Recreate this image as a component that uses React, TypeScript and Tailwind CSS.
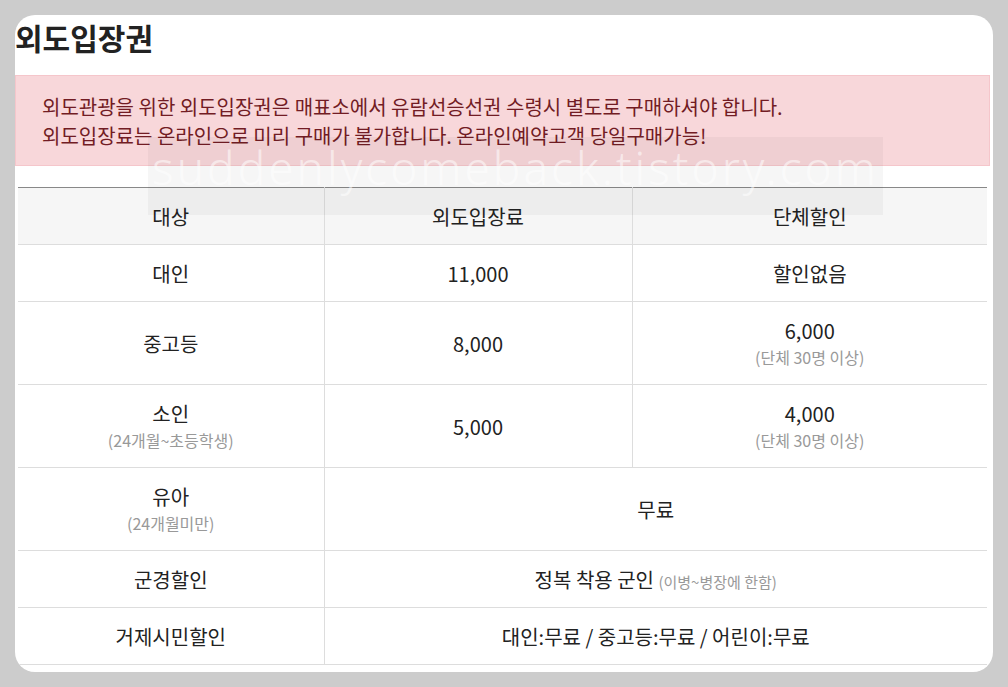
import React from "react";

const font = { fontFamily: '"Noto Sans CJK KR", "Noto Sans", sans-serif' };

function Cell({
  children,
  sub,
  colSpan,
  last,
  header,
}: {
  children: React.ReactNode;
  sub?: React.ReactNode;
  colSpan?: number;
  last?: boolean;
  header?: boolean;
}) {
  return (
    <td
      colSpan={colSpan}
      className={
        "text-center align-middle pt-[15px] pb-[14px] border-b border-[#dddddd] text-[20px] leading-[27px] text-[#222222] " +
        (last ? "" : "border-r ") +
        (header ? "bg-[#f6f6f6]" : "")
      }
    >
      <div className="h-[27px]">{children}</div>
      {sub && <div className="text-[16px] leading-[26px] text-[#999999]">{sub}</div>}
    </td>
  );
}

export default function App() {
  return (
    <div className="w-[1008px] h-[687px] bg-[#cccccc] p-[15px]" style={font}>
      <div className="relative w-[978px] h-[657px] bg-white rounded-[20px] overflow-hidden">
        <h2 className="mt-px text-[30px] leading-[42px] font-bold text-[#222222]">외도입장권</h2>
        <div className="mt-[17px] w-[975px] border border-[#f5c6cb] bg-[#f8d7da] text-[#721c24] pl-[26px] pt-[16px] pb-[15px] text-[20px] leading-[29px]">
          <p>외도관광을 위한 외도입장권은 매표소에서 유람선승선권 수령시 별도로 구매하셔야 합니다.</p>
          <p>외도입장료는 온라인으로 미리 구매가 불가합니다. 온라인예약고객 당일구매가능!</p>
        </div>
        <table className="mt-[21px] ml-[3px] w-[969px] border-collapse table-fixed border-t border-t-[#888888]">
          <colgroup>
            <col className="w-[306px]" />
            <col className="w-[308px]" />
            <col />
          </colgroup>
          <tbody>
            <tr>
              <Cell header>대상</Cell>
              <Cell header>외도입장료</Cell>
              <Cell header last>단체할인</Cell>
            </tr>
            <tr>
              <Cell>대인</Cell>
              <Cell>11,000</Cell>
              <Cell last>할인없음</Cell>
            </tr>
            <tr>
              <Cell>중고등</Cell>
              <Cell>8,000</Cell>
              <Cell last sub="(단체 30명 이상)">6,000</Cell>
            </tr>
            <tr>
              <Cell sub="(24개월~초등학생)">소인</Cell>
              <Cell>5,000</Cell>
              <Cell last sub="(단체 30명 이상)">4,000</Cell>
            </tr>
            <tr>
              <Cell sub="(24개월미만)">유아</Cell>
              <Cell colSpan={2} last>무료</Cell>
            </tr>
            <tr>
              <Cell>군경할인</Cell>
              <Cell colSpan={2} last>
                정복 착용 군인 <span className="text-[15px] leading-none text-[#999999]">(이병~병장에 한함)</span>
              </Cell>
            </tr>
            <tr>
              <Cell>거제시민할인</Cell>
              <Cell colSpan={2} last>대인:무료 / 중고등:무료 / 어린이:무료</Cell>
            </tr>
          </tbody>
        </table>
        <div className="absolute left-[133px] top-[122px] w-[735px] h-[78px] bg-[rgba(0,0,0,0.035)] flex justify-center pointer-events-none">
          <span
            className="mt-[4px] text-[46px] leading-[52px] font-light tracking-[3px] text-[rgba(255,255,255,0.55)] whitespace-nowrap"
            style={{ fontFamily: '"Noto Sans", "Open Sans", sans-serif' }}
          >
            suddenlycomeback.tistory.com
          </span>
        </div>
      </div>
    </div>
  );
}
